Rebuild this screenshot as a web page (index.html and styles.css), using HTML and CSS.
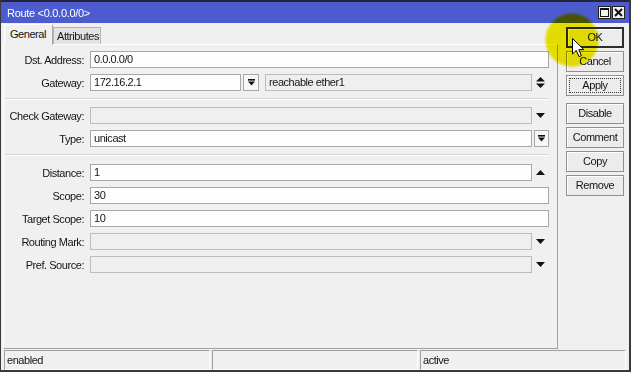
FILE: index.html
```html
<!DOCTYPE html>
<html>
<head>
<meta charset="utf-8">
<title>Route</title>
<link rel="stylesheet" href="styles.css">
</head>
<body>
<div class="window">
  <div class="titlebar">
    <span class="title">Route &lt;0.0.0.0/0&gt;</span>
    <div class="tbtns">
      <span class="tbtn"><svg width="9" height="9" viewBox="0 0 9 9"><rect x="0.5" y="0.5" width="8" height="8" fill="none" stroke="#111"/><rect x="0" y="0" width="9" height="2" fill="#111"/></svg></span>
      <span class="tbtn"><svg width="9" height="9" viewBox="0 0 9 9"><path d="M1 1 L8 8 M8 1 L1 8" stroke="#111" stroke-width="2"/></svg></span>
    </div>
  </div>
  <div class="main">
    <div class="left">
      <div class="tabs">
        <div class="tab active">General</div>
        <div class="tab">Attributes</div>
      </div>
      <div class="panel">
        <div class="row">
          <label class="lbl">Dst. Address:</label>
          <div class="field">0.0.0.0/0</div>
        </div>
        <div class="row">
          <label class="lbl">Gateway:</label>
          <div class="field gw">172.16.2.1</div>
          <div class="ddbtn gwbtn"><svg width="7" height="7" viewBox="0 0 7 7"><rect x="0" y="0" width="7" height="1.6" fill="#111"/><polygon points="0,2.6 7,2.6 3.5,6.6" fill="#111"/></svg></div>
          <div class="field dis reach">reachable ether1</div>
          <div class="slot"><svg width="9" height="11" viewBox="0 0 9 11"><polygon points="0,4.5 9,4.5 4.5,0" fill="#111"/><polygon points="0,6.5 9,6.5 4.5,11" fill="#111"/></svg></div>
        </div>
        <div class="sep"></div>
        <div class="row">
          <label class="lbl">Check Gateway:</label>
          <div class="field dis"></div>
          <div class="slot"><svg width="9" height="5" viewBox="0 0 9 5"><polygon points="0,0 9,0 4.5,5" fill="#111"/></svg></div>
        </div>
        <div class="row">
          <label class="lbl">Type:</label>
          <div class="field">unicast</div>
          <div class="ddbtn"><svg width="7" height="7" viewBox="0 0 7 7"><rect x="0" y="0" width="7" height="1.6" fill="#111"/><polygon points="0,2.6 7,2.6 3.5,6.6" fill="#111"/></svg></div>
        </div>
        <div class="sep sep2"></div>
        <div class="row">
          <label class="lbl">Distance:</label>
          <div class="field">1</div>
          <div class="slot"><svg width="9" height="5" viewBox="0 0 9 5"><polygon points="0,5 9,5 4.5,0" fill="#111"/></svg></div>
        </div>
        <div class="row">
          <label class="lbl">Scope:</label>
          <div class="field">30</div>
        </div>
        <div class="row">
          <label class="lbl">Target Scope:</label>
          <div class="field">10</div>
        </div>
        <div class="row">
          <label class="lbl">Routing Mark:</label>
          <div class="field dis"></div>
          <div class="slot"><svg width="9" height="5" viewBox="0 0 9 5"><polygon points="0,0 9,0 4.5,5" fill="#111"/></svg></div>
        </div>
        <div class="row">
          <label class="lbl">Pref. Source:</label>
          <div class="field dis"></div>
          <div class="slot"><svg width="9" height="5" viewBox="0 0 9 5"><polygon points="0,0 9,0 4.5,5" fill="#111"/></svg></div>
        </div>
      </div>
    </div>
    <div class="buttons">
      <div class="btn default">OK</div>
      <div class="btn">Cancel</div>
      <div class="btn focus">Apply</div>
      <div class="btn gap">Disable</div>
      <div class="btn">Comment</div>
      <div class="btn">Copy</div>
      <div class="btn">Remove</div>
    </div>
  </div>
  <div class="status">
    <div class="cell">enabled</div>
    <div class="cell"></div>
    <div class="cell">active</div>
  </div>
  <div class="highlight"></div>
  <svg class="cursor" width="13" height="20" viewBox="0 0 13 20"><path d="M0.5 0.5 L0.5 16 L4.3 12.4 L7 18.6 L9.4 17.6 L6.8 11.6 L11.8 11.6 Z" fill="#fff" stroke="#000" stroke-width="1" stroke-linejoin="miter"/></svg>
</div>
</body>
</html>
```

FILE: styles.css
```css
* { box-sizing: border-box; }

body {
  margin: 0;
  width: 631px;
  height: 372px;
  overflow: hidden;
  font-family: "Liberation Sans", Arial, sans-serif;
  font-size: 11px;
  letter-spacing: -0.45px;
  color: #151515;
  background: #f0f0f0;
}

.window {
  position: relative;
  width: 631px;
  height: 372px;
  background: #f0f0f0;
  border-left: 1px solid #3a3a3a;
  border-right: 2px solid #3a3a3a;
  border-bottom: 2px solid #3a3a3a;
  display: flex;
  flex-direction: column;
}

.titlebar {
  height: 23px;
  flex: none;
  border-top: 2px solid #24243a;
  background: #4c5ccf;
  display: flex;
  align-items: center;
  justify-content: space-between;
  padding: 0 4px 0 6px;
  color: #fff;
}

.title { letter-spacing: -0.3px; }

.tbtns { display: flex; gap: 1px; }

.tbtn {
  width: 13px;
  height: 13px;
  background: #f2f2f2;
  border: 1px solid #222;
  display: flex;
  align-items: center;
  justify-content: center;
}

.main {
  flex: 1;
  display: flex;
  min-height: 0;
}

.left {
  width: 557px;
  padding-left: 2px;
  display: flex;
  flex-direction: column;
}

.tabs {
  height: 21px;
  flex: none;
  display: flex;
  align-items: flex-end;
  padding-left: 1px;
}

.tab {
  width: 48px;
  height: 17px;
  background: #e3e3e3;
  border: 1px solid #b4b4b4;
  border-bottom: none;
  padding-left: 3px;
  line-height: 16px;
}

.tab.active {
  height: 21px;
  margin-bottom: -1px;
  position: relative;
  z-index: 1;
  background: #f0f0f0;
  border-color: #ffffff #a8a8a8 #f0f0f0 #ffffff;
  padding-left: 5px;
  line-height: 18px;
  width: 49px;
}

.panel {
  flex: 1;
  border: 1px solid;
  border-color: #ffffff #a3a3a3 #a3a3a3 #ffffff;
  padding: 6px 8px 0 0;
  display: flex;
  flex-direction: column;
  gap: 6px;
}

.row {
  display: flex;
  align-items: center;
  height: 17px;
}

.lbl {
  width: 86px;
  padding-right: 6px;
  text-align: right;
  flex: none;
}

.field {
  flex: 1;
  height: 17px;
  background: #fdfdfd;
  border: 1px solid #a7a7a7;
  padding: 0 3px;
  line-height: 15px;
  white-space: nowrap;
}

.field.dis {
  background: #efefef;
  border-color: #bcbcbc;
}

.field.gw { flex: none; width: 151px; }

.gwbtn { margin-left: 2px; margin-right: 6px; }

.ddbtn {
  width: 15px;
  height: 17px;
  flex: none;
  margin-left: 2px;
  border: 1px solid #a7a7a7;
  background: #f7f7f7;
  display: flex;
  align-items: center;
  justify-content: center;
}

.gwbtn { width: 16px; }

.slot {
  width: 17px;
  height: 17px;
  flex: none;
  display: flex;
  align-items: center;
  justify-content: center;
}

.sep {
  height: 2px;
  margin: 1px 0 1px 1px;
  border-top: 1px solid #d8d8d8;
  border-bottom: 1px solid #ffffff;
}

.sep2 { margin-bottom: 2px; }

.buttons {
  flex: 1;
  padding: 4px 0 0 8px;
  display: flex;
  flex-direction: column;
  gap: 3px;
}

.btn {
  width: 58px;
  height: 21px;
  border: 1px solid #8f8f8f;
  background: #ececec;
  box-shadow: inset 1px 1px 0 #ffffff;
  text-align: center;
  line-height: 19px;
}

.btn.default {
  border: 2px solid #2e2e2e;
  line-height: 17px;
}

.btn.focus {
  outline: 1px dotted #3a3a3a;
  outline-offset: -4px;
}

.btn.gap { margin-top: 4px; }

.status {
  height: 20px;
  flex: none;
  margin: 1px 3px 0 3px;
  display: flex;
  gap: 2px;
}

.cell {
  flex: 1;
  border: 1px solid;
  border-color: #a0a0a0 #ffffff #ffffff #a0a0a0;
  padding-left: 2px;
  line-height: 18px;
}

.highlight {
  position: absolute;
  left: 543px;
  top: 12px;
  width: 56px;
  height: 56px;
  border-radius: 50%;
  background: radial-gradient(circle, #f2ea00 0%, #f2ea00 62%, rgba(242,234,0,0) 72%);
  mix-blend-mode: multiply;
  pointer-events: none;
}

.cursor {
  position: absolute;
  left: 571px;
  top: 38px;
}
```
